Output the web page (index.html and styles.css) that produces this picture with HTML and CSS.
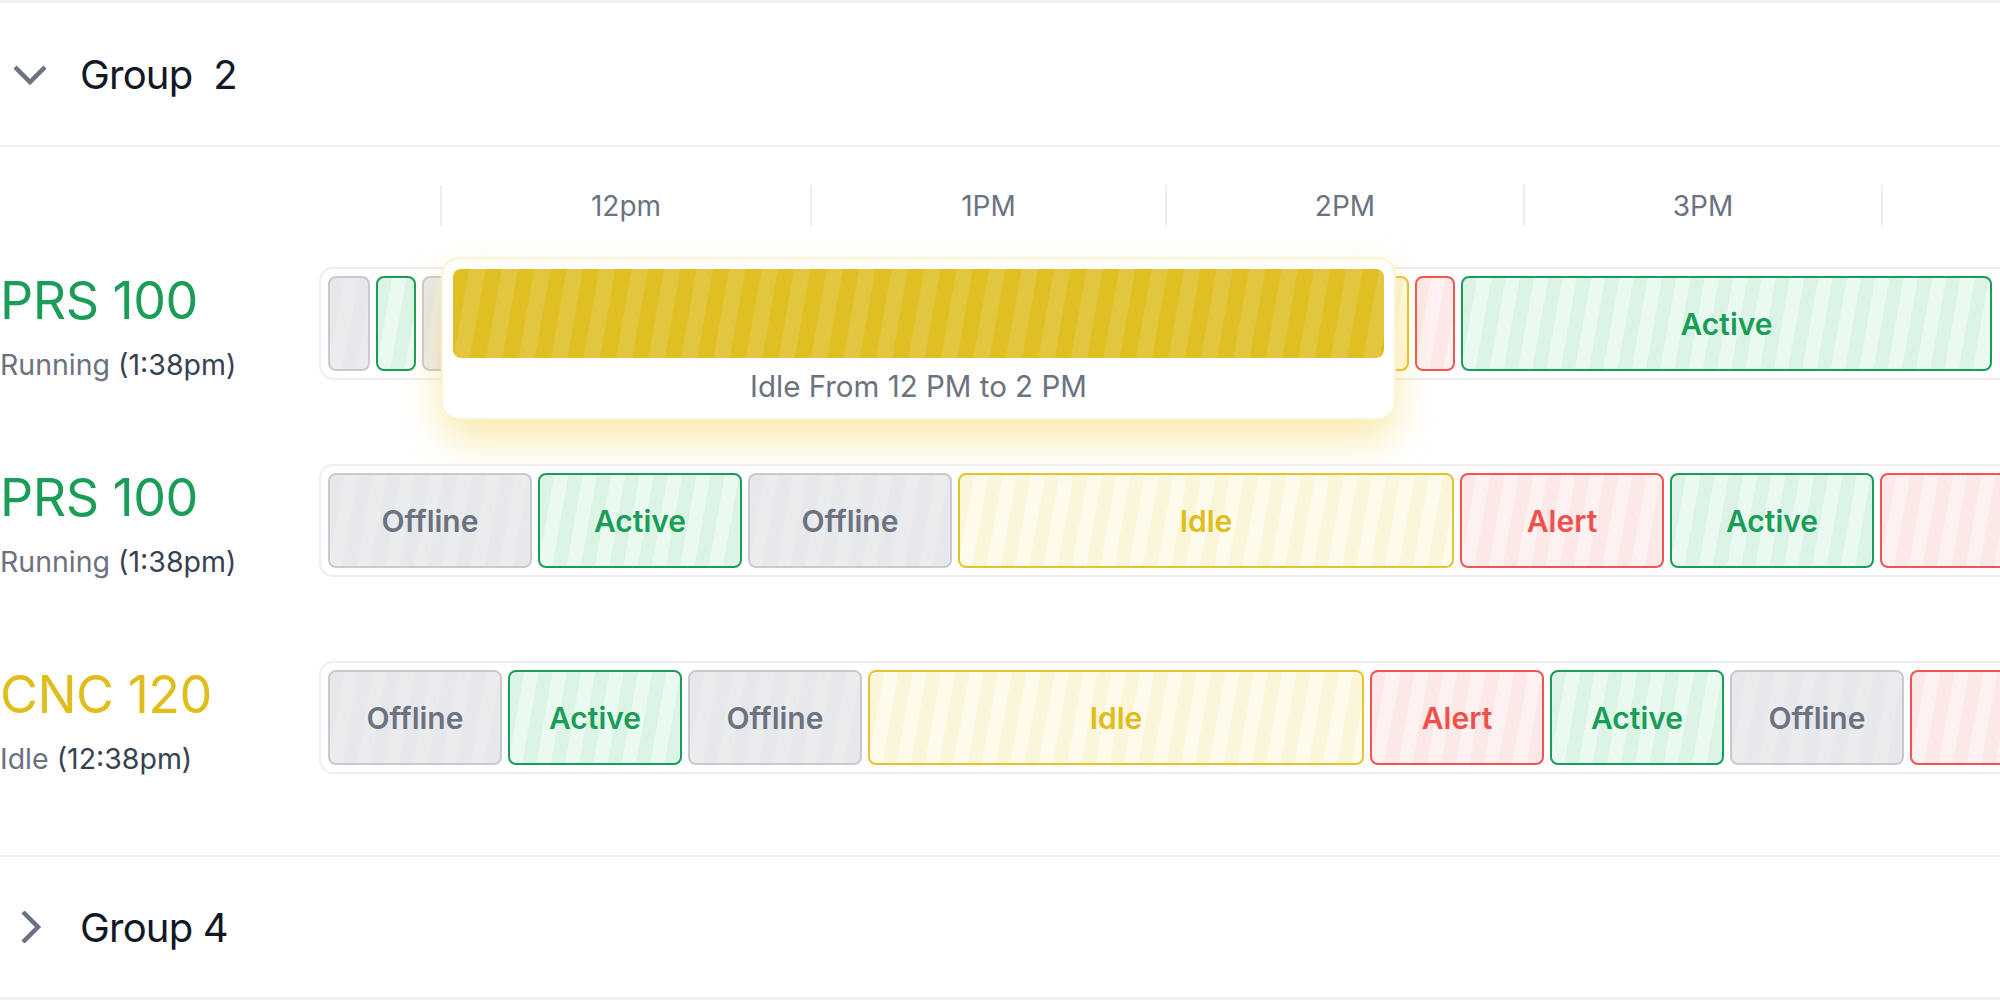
FILE: index.html
```html
<!DOCTYPE html>
<html lang="en">
<head>
    <meta charset="UTF-8">
    <meta name="viewport" content="width=device-width, initial-scale=1.0">
    <title>Machine timeline</title>
    <link rel="stylesheet" href="styles.css">
</head>
<body>
    <div class="page">
        <!-- Group 2 (open) -->
        <div class="group-head first">
            <svg class="chev" viewBox="0 0 32 32"><path d="M1 9 L16 24 L31 9"/></svg>
            <span class="group-title">Group&nbsp; 2</span>
        </div>

        <div class="timeline">
            <div class="axis">
                <div class="tick t1">12pm</div>
                <div class="tick t2">1PM</div>
                <div class="tick t3">2PM</div>
                <div class="tick t4">3PM</div>
                <div class="tick t5"></div>
            </div>

            <div class="machines">
                <div class="machine">
                    <div class="machine-info">
                        <div class="machine-name green">PRS 100</div>
                        <div class="machine-state">Running <span>(1:38pm)</span></div>
                    </div>
                    <div class="track">
                        <div class="seg offline" style="width:42px"></div>
                        <div class="seg active" style="width:40px"></div>
                        <div class="seg offline" style="width:50px"></div>
                        <div class="seg idle" style="width:931px"></div>
                        <div class="seg alert" style="width:40px"></div>
                        <div class="seg active" style="width:531px">Active</div>

                        <!-- hover tooltip -->
                        <div class="tooltip">
                            <div class="tooltip-bar"></div>
                            <div class="tooltip-text">Idle From 12 PM to 2 PM</div>
                        </div>
                    </div>
                </div>

                <div class="machine">
                    <div class="machine-info">
                        <div class="machine-name green">PRS 100</div>
                        <div class="machine-state">Running <span>(1:38pm)</span></div>
                    </div>
                    <div class="track">
                        <div class="seg offline" style="width:204px">Offline</div>
                        <div class="seg active" style="width:204px">Active</div>
                        <div class="seg offline" style="width:204px">Offline</div>
                        <div class="seg idle" style="width:496px">Idle</div>
                        <div class="seg alert" style="width:204px">Alert</div>
                        <div class="seg active" style="width:204px">Active</div>
                        <div class="seg alert" style="width:204px"></div>
                    </div>
                </div>

                <div class="machine">
                    <div class="machine-info">
                        <div class="machine-name yellow">CNC 120</div>
                        <div class="machine-state">Idle <span>(12:38pm)</span></div>
                    </div>
                    <div class="track">
                        <div class="seg offline" style="width:174px">Offline</div>
                        <div class="seg active" style="width:174px">Active</div>
                        <div class="seg offline" style="width:174px">Offline</div>
                        <div class="seg idle" style="width:496px">Idle</div>
                        <div class="seg alert" style="width:174px">Alert</div>
                        <div class="seg active" style="width:174px">Active</div>
                        <div class="seg offline" style="width:174px">Offline</div>
                        <div class="seg alert" style="width:174px"></div>
                    </div>
                </div>
            </div>
        </div>

        <!-- Group 4 (closed) -->
        <div class="group-head last">
            <svg class="chev" viewBox="0 0 32 32"><path d="M9 1 L24 16 L9 31"/></svg>
            <span class="group-title">Group 4</span>
        </div>
    </div>
</body>
</html>
```

FILE: styles.css
```css
* {
    margin: 0;
    padding: 0;
    box-sizing: border-box;
}

body {
    font-family: Inter, 'Noto Sans', sans-serif;
    background-color: #fff;
    color: #111827;
    overflow: hidden;
}

.page {
    width: 2000px;
    height: 1000px;
    overflow: hidden;
}

/* group header rows */
.group-head {
    display: flex;
    align-items: center;
    gap: 34px;
    padding-left: 14px;
    border-top: 2px solid #eef0f2;
    border-bottom: 2px solid #eef0f2;
}

.group-head.first {
    height: 147px;
    border-top-width: 3px;
}

.group-head.last {
    height: 145px;
    border-bottom-width: 3px;
}

.chev {
    width: 32px;
    height: 32px;
    fill: none;
    stroke: #6b7280;
    stroke-width: 4.5;
}

.group-title {
    font-size: 40px;
    letter-spacing: -0.02em;
    color: #111827;
}

/* time axis */
.axis {
    display: flex;
    margin-top: 38px;
    padding-left: 440px;
    height: 41px;
}

.tick {
    flex: none;
    border-left: 2px solid #eceef0;
    display: flex;
    align-items: center;
    justify-content: center;
    font-size: 28px;
    color: #6b7280;
}

.t1 { width: 370px; }
.t2 { width: 355px; }
.t3 { width: 358px; }
.t4 { width: 358px; }
.t5 { width: 358px; }

.machines {
    padding-top: 41px;
    padding-bottom: 81px;
}

.machine {
    display: flex;
    align-items: center;
    height: 113px;
}

.machine + .machine {
    margin-top: 84px;
}

.machine-info {
    width: 319px;
    flex: none;
    padding-top: 6px;
    display: flex;
    flex-direction: column;
    gap: 16px;
}

.machine-name {
    font-size: 52px;
    line-height: 60px;
    letter-spacing: -0.01em;
}

.machine-name.green { color: #1a9d57; }
.machine-name.yellow { color: #dfbd1c; }

.machine-state {
    font-size: 28.5px;
    line-height: 36px;
    color: #6b7280;
}

.machine-state span {
    color: #374151;
}

/* status track */
.track {
    position: relative;
    flex: none;
    width: 1720px;
    height: 113px;
    display: flex;
    gap: 6px;
    padding: 7px;
    border: 2px solid #edeef0;
    border-radius: 14px;
    background: #fff;
}

.seg {
    flex: none;
    height: 95px;
    border: 2px solid;
    border-radius: 8px;
    display: flex;
    align-items: center;
    justify-content: center;
    font-size: 30px;
    font-weight: 600;
}

.seg.offline {
    color: #6b7280;
    border-color: #c8cacf;
    background: repeating-linear-gradient(100deg, #e7e8eb 0 14px, #ebecee 14px 28px);
}

.seg.active {
    color: #1a9d57;
    border-color: #1a9d57;
    background: repeating-linear-gradient(100deg, #dcf4e6 0 14px, #ebfaf1 14px 28px);
}

.seg.idle {
    color: #dfbd1c;
    border-color: #e5c32c;
    background: repeating-linear-gradient(100deg, #fbf5d9 0 14px, #fffbec 14px 28px);
}

.seg.alert {
    color: #f0504c;
    border-color: #f4544f;
    background: repeating-linear-gradient(100deg, #fde8e8 0 14px, #fef1f1 14px 28px);
}

/* tooltip over row 1 */
.tooltip {
    position: absolute;
    left: 122px;
    top: -10px;
    width: 951px;
    height: 159px;
    padding: 10px;
    background: #fff;
    border-radius: 16px;
    box-shadow: 0 0 0 2px #fcf3cf, 0 20px 40px rgba(236, 196, 30, 0.38);
    display: flex;
    flex-direction: column;
}

.tooltip-bar {
    height: 89px;
    border-radius: 8px;
    background: repeating-linear-gradient(100deg, #dfbf22 0 16px, #e3c640 16px 32px);
}

.tooltip-text {
    flex: 1;
    display: flex;
    align-items: center;
    justify-content: center;
    padding-top: 6px;
    font-size: 29.5px;
    color: #6b7280;
}
```
